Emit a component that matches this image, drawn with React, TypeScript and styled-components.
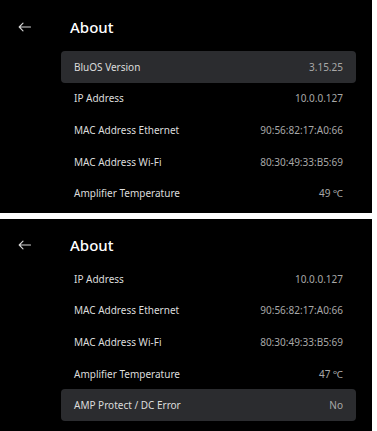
import styled, { createGlobalStyle } from "styled-components";

type Item = { label: string; value: string; active?: boolean };

const firstScreen: Item[] = [
  { label: "BluOS Version", value: "3.15.25", active: true },
  { label: "IP Address", value: "10.0.0.127" },
  { label: "MAC Address Ethernet", value: "90:56:82:17:A0:66" },
  { label: "MAC Address Wi-Fi", value: "80:30:49:33:B5:69" },
  { label: "Amplifier Temperature", value: "49 ℃" },
];

const secondScreen: Item[] = [
  { label: "IP Address", value: "10.0.0.127" },
  { label: "MAC Address Ethernet", value: "90:56:82:17:A0:66" },
  { label: "MAC Address Wi-Fi", value: "80:30:49:33:B5:69" },
  { label: "Amplifier Temperature", value: "47 ℃" },
  { label: "AMP Protect / DC Error", value: "No", active: true },
];

const BackArrow = () => (
  <svg width="13" height="10" viewBox="0 0 13 10" fill="none">
    <path
      d="M12.5 5H1.2M5 1.2L1.2 5 5 8.8"
      stroke="#d6d6d6"
      strokeWidth="1.1"
      strokeLinecap="round"
      strokeLinejoin="round"
    />
  </svg>
);

const AboutScreen = ({
  items,
  height,
  headerTop,
  listTop,
}: {
  items: Item[];
  height: number;
  headerTop: number;
  listTop: number;
}) => (
  <ScreenStyled height={height}>
    <HeaderStyled headerTop={headerTop}>
      <BackButtonStyled>
        <BackArrow />
      </BackButtonStyled>
      <TitleStyled>About</TitleStyled>
    </HeaderStyled>
    <ListStyled listTop={listTop}>
      {items.map((item) => (
        <RowStyled key={item.label} className={item.active ? "active" : ""}>
          <LabelStyled>{item.label}</LabelStyled>
          <ValueStyled>{item.value}</ValueStyled>
        </RowStyled>
      ))}
    </ListStyled>
  </ScreenStyled>
);

const App = () => (
  <>
    <GlobalStyle />
    <PageStyled>
      <AboutScreen items={firstScreen} height={213} headerTop={3} listTop={0} />
      <AboutScreen items={secondScreen} height={212} headerTop={1} listTop={-7} />
    </PageStyled>
  </>
);

const GlobalStyle = createGlobalStyle`
  html, body {
    margin: 0;
    padding: 0;
    background: #ffffff;
  }
  body {
    font-family: "Noto Sans", "Open Sans", sans-serif;
    -webkit-font-smoothing: antialiased;
  }
`;

const PageStyled = styled.div`
  display: flex;
  flex-direction: column;
  gap: 6px;
  width: 372px;
`;

const ScreenStyled = styled.div<{ height: number }>`
  display: flex;
  flex-direction: column;
  height: ${(props) => props.height}px;
  background-color: #000000;
  overflow: hidden;
`;

const HeaderStyled = styled.div<{ headerTop: number }>`
  display: flex;
  align-items: center;
  height: 51px;
  padding-top: ${(props) => props.headerTop}px;
  box-sizing: border-box;
`;

const BackButtonStyled = styled.div`
  display: flex;
  align-items: center;
  justify-content: center;
  width: 18px;
  margin-left: 15px;
  margin-right: 37px;
`;

const TitleStyled = styled.div`
  color: #ffffff;
  font-size: 15px;
  font-weight: 500;
`;

const ListStyled = styled.div<{ listTop: number }>`
  display: flex;
  flex-direction: column;
  margin: ${(props) => props.listTop}px 16px 0 61px;
`;

const RowStyled = styled.div`
  display: flex;
  align-items: center;
  justify-content: space-between;
  height: 31.6px;
  padding: 0 13px;
  border-radius: 4px;
  font-size: 10px;

  &.active {
    background-color: #2b2c2f;
  }
`;

const LabelStyled = styled.span`
  color: #dcdcdc;
`;

const ValueStyled = styled.span`
  color: #a8a8a8;
`;

export default App;
